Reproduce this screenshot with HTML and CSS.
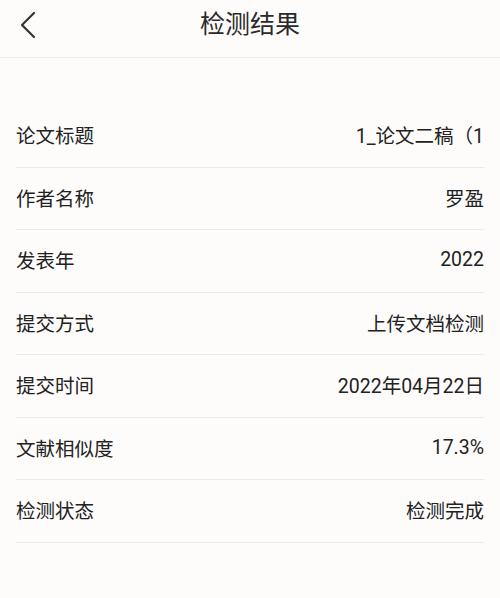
FILE: index.html
```html
<!DOCTYPE html>
<html lang="zh-CN">
<head>
    <meta charset="UTF-8">
    <meta name="viewport" content="width=device-width, initial-scale=1.0">
    <title>检测结果</title>
    <link rel="stylesheet" href="styles.css">
</head>
<body>
    <div class="header">
        <svg class="back" width="20" height="30" viewBox="0 0 20 30">
            <path d="M15 3 L3 15 L15 27" fill="none" stroke="#333" stroke-width="2.2" stroke-linecap="round" stroke-linejoin="round"/>
        </svg>
        <h1>检测结果</h1>
    </div>

    <div class="list">
        <div class="row"><span class="label">论文标题</span><span class="value">1_论文二稿（1</span></div>
        <div class="row"><span class="label">作者名称</span><span class="value">罗盈</span></div>
        <div class="row"><span class="label">发表年</span><span class="value">2022</span></div>
        <div class="row"><span class="label">提交方式</span><span class="value">上传文档检测</span></div>
        <div class="row"><span class="label">提交时间</span><span class="value">2022年04月22日</span></div>
        <div class="row"><span class="label">文献相似度</span><span class="value">17.3%</span></div>
        <div class="row"><span class="label">检测状态</span><span class="value">检测完成</span></div>
    </div>
</body>
</html>
```

FILE: styles.css
```css
body {
    margin: 0;
    background-color: #fdfcfb;
    font-family: Roboto, "Noto Sans CJK SC", sans-serif;
    color: #222;
}
.header {
    position: relative;
    height: 57px;
    display: flex;
    justify-content: center;
    align-items: center;
    border-bottom: 1px solid #f1efec;
}
.back {
    position: absolute;
    left: 19px;
    top: 10px;
}
h1 {
    margin: 0;
    font-size: 25px;
    font-weight: 400;
    color: #2a2a2a;
    line-height: 1;
    margin-top: -8px;
}
.list {
    margin-top: 47px;
    padding: 0 16px;
}
.row {
    height: 62.5px;
    box-sizing: border-box;
    display: flex;
    justify-content: space-between;
    align-items: center;
    border-bottom: 1px solid #ebe9e6;
    font-size: 19.5px;
    padding-bottom: 2px;
}
.label {
    color: #222;
}
.value {
    color: #222;
}
```
